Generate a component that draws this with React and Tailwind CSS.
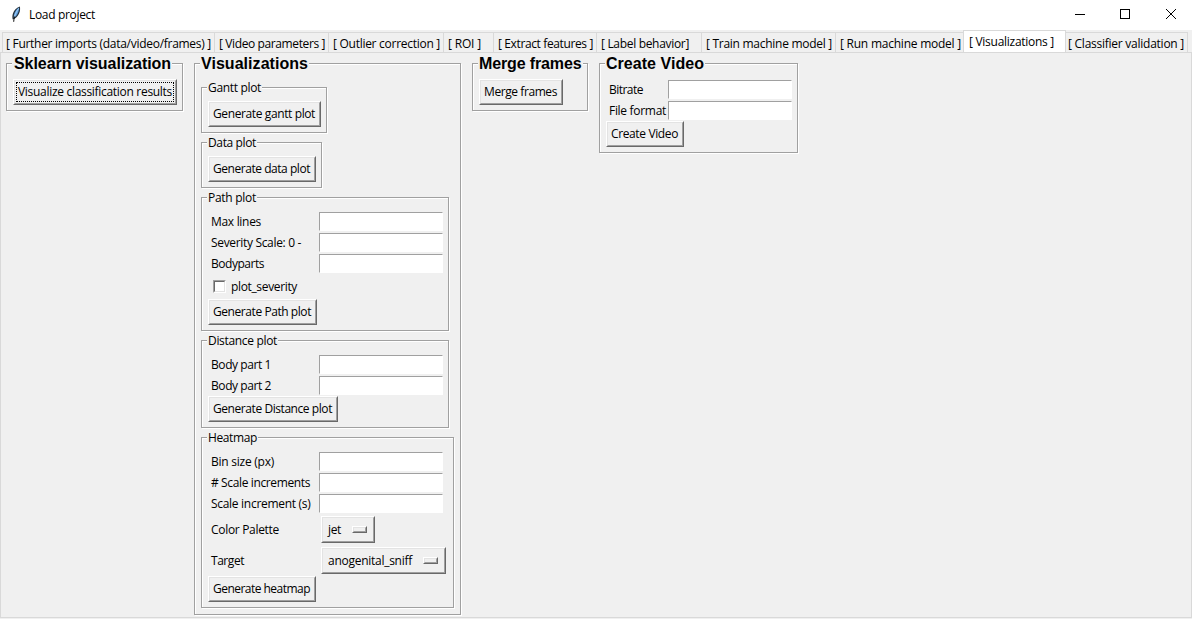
import React, { useLayoutEffect, useRef, useState } from "react";

// A run of text whose tracking is tuned so that it spans w pixels.
function Fit({ w, children, className = "" }) {
  const ref = useRef(null);
  const [spacing, setSpacing] = useState(null);
  useLayoutEffect(() => {
    const natural = ref.current.getBoundingClientRect().width;
    setSpacing((w - natural) / String(children).length);
  }, [w, children]);
  return (
    <span
      ref={ref}
      className={`inline-block shrink-0 whitespace-pre ${className}`}
      style={spacing === null ? undefined : { letterSpacing: `${spacing}px` }}
    >
      {children}
    </span>
  );
}

function Frame({ title, w, big, titlePad = "pl-px", className, children }) {
  return (
    <section
      className={`flex shrink-0 flex-col items-start border border-[#a0a0a0] shadow-[1px_1px_0_#fff,inset_1px_1px_0_#fff] ${className}`}
    >
      {big ? (
        <h2 className={`-mt-2.5 ml-[5px] h-5 shrink-0 bg-[#f0f0f0] pr-px font-['Liberation_Sans',Arial,sans-serif] text-base leading-5 font-bold ${titlePad}`}>
          <Fit w={w}>{title}</Fit>
        </h2>
      ) : (
        <h3 className="-mt-2 ml-[5px] flex h-4 shrink-0 bg-[#f0f0f0] px-px leading-4">
          <Fit w={w}>{title}</Fit>
        </h3>
      )}
      {children}
    </section>
  );
}

function Raised({ className, children }) {
  return (
    <div className={`shrink-0 border border-t-white border-r-[#696969] border-b-[#696969] border-l-white ${className}`}>
      <div className="flex h-full items-center border border-t-[#e3e3e3] border-r-[#a0a0a0] border-b-[#a0a0a0] border-l-[#e3e3e3]">
        {children}
      </div>
    </div>
  );
}

function Button({ w, focus, className, children }) {
  return (
    <button type="button" className="block shrink-0 text-left">
      <Raised className={`h-[26px] ${className}`}>
        {focus ? (
          <span className="ml-px flex h-5 w-[158px] items-center border border-dotted border-black pl-px">
            <Fit w={w}>{children}</Fit>
          </span>
        ) : (
          <span className="flex items-center pl-[3px]">
            <Fit w={w}>{children}</Fit>
          </span>
        )}
      </Raised>
    </button>
  );
}

function Entry({ label, w, labelClass = "w-[111px]" }) {
  return (
    <label className="flex h-[21px] shrink-0 items-start">
      <span className={`shrink-0 pl-[3px] leading-[19px] ${labelClass}`}>
        <Fit w={w}>{label}</Fit>
      </span>
      <input className="h-[19px] w-[124px] border border-t-[#a0a0a0] border-r-white border-b-white border-l-[#a0a0a0] bg-white outline-none" />
    </label>
  );
}

function Option({ label, w, value, vw, className, rowClass }) {
  return (
    <div className={`flex h-[27px] shrink-0 items-center ${rowClass}`}>
      <span className="w-[113px] shrink-0 pl-[3px]">
        <Fit w={w}>{label}</Fit>
      </span>
      <Raised className={`h-[27px] ${className}`}>
        <span className="flex w-full items-center justify-between pr-1.5 pl-[5px]">
          <Fit w={vw}>{value}</Fit>
          <Raised className="h-[7px] w-[15px]" />
        </span>
      </Raised>
    </div>
  );
}

const tabs = [
  ["[ Further imports (data/video/frames) ]", 205, "w-[212px]"],
  ["[ Video parameters ]", 106, "w-[114px]"],
  ["[ Outlier correction ]", 107, "w-[115px]"],
  ["[ ROI ]", 33, "w-[50px]"],
  ["[ Extract features ]", 95, "w-[103px]"],
  ["[ Label behavior]", 88, "w-[105px]"],
  ["[ Train machine model ]", 126, "w-[134px]"],
  ["[ Run machine model ]", 121, "w-[128px]"],
  ["[ Visualizations ]", 85, "w-[103px]", true],
  ["[ Classifier validation ]", 116, "w-[122px]"],
];

function Feather() {
  return (
    <svg className="block" width="16" height="18" viewBox="0 0 16 18">
      <path d="M11.800.500C9 1.200 6 4 5 7.200c-.8 2.400-.8 4.600-.2 6.300l1.700-.7c2.500-1.200 4.500-4.200 5.300-7.300.4-1.800.4-3.800 0-5z" fill="#27333f" />
      <path d="M11 1.600C8.800 3 6.700 5.500 6 8.800l-.3 3C8 10.600 9.800 8 10.600 5.200c.4-1.300.5-2.600.4-3.600z" fill="#5c9ee0" />
      <path d="M10.600 2.400C8.400 5.800 7.200 8.200 6.400 11" stroke="#b9dcf8" strokeWidth=".8" fill="none" />
      <path d="M6.600 10.500C6 12.500 5.800 14 5.700 15.800" stroke="#111" strokeWidth="1" fill="none" />
    </svg>
  );
}

export default function App() {
  return (
    <div className="flex h-[619px] w-[1192px] flex-col overflow-hidden bg-[#f0f0f0] font-['Open_Sans','Noto_Sans',sans-serif] text-[12px] leading-4 text-black">
      <header className="flex h-[30px] shrink-0 items-center bg-white pl-2">
        <Feather />
        <Fit w={66} className="ml-[5px]">Load project</Fit>
        <svg className="ml-auto" width="117" height="30" viewBox="0 0 117 30" fill="none" stroke="#000" shapeRendering="crispEdges">
          <path d="M0 14.500h10" />
          <rect x="45.500" y="9.500" width="9" height="9" />
          <path d="M91 9l10 10M101 9l-10 10" shapeRendering="auto" />
        </svg>
      </header>

      <nav className="flex h-[22px] shrink-0 items-end pl-0.5">
        {tabs.map(([text, w, width, active], i) =>
          active ? (
            <div key={text} className={`h-[22px] shrink-0 border border-b-0 border-[#d9d9d9] bg-white pt-[3px] pl-[5px] ${width}`}>
              <Fit w={w}>{text}</Fit>
            </div>
          ) : (
            <div
              key={text}
              className={`h-5 shrink-0 border-t border-[#d9d9d9] pt-[3px] ${i === 9 ? "border-r pl-0.5" : i === 0 ? "border-l pl-[3px]" : "border-l pl-1"} ${width}`}
            >
              <Fit w={w}>{text}</Fit>
            </div>
          )
        )}
      </nav>

      <main className="flex h-[566px] shrink-0 items-start border border-[#d9d9d9] pt-2.5 pl-[5px]">
        <Frame big title="Sklearn visualization" w={157} titlePad="pl-0.5" className="h-12 w-[177px]">
          <div className="mt-[5px] ml-1.5">
            <Button w={154} focus className="w-[164px]">Visualize classification results</Button>
          </div>
        </Frame>

        <Frame big title="Visualizations" w={107} className="ml-[11px] h-[552px] w-[267px]">
          <div className="mt-[13px] ml-1.5 flex flex-col gap-[9px]">
            <Frame title="Gantt plot" w={53} className="h-[46px] w-[126px]">
              <div className="mt-[5px] ml-1.5">
                <Button w={102} className="w-[113px]">Generate gantt plot</Button>
              </div>
            </Frame>
            <Frame title="Data plot" w={48} className="h-[46px] w-[121px]">
              <div className="mt-[5px] ml-1.5">
                <Button w={97} className="w-[108px]">Generate data plot</Button>
              </div>
            </Frame>
            <Frame title="Path plot" w={48} className="h-[134px] w-[248px]">
              <div className="mt-1.5 ml-1.5 flex flex-col">
                <Entry label="Max lines" w={50} />
                <Entry label="Severity Scale: 0 -" w={90} />
                <Entry label="Bodyparts" w={53} />
                <label className="flex h-6 items-start pt-[5px] pl-[5px]">
                  <span className="size-[13px] border border-t-[#a0a0a0] border-r-white border-b-white border-l-[#a0a0a0]">
                    <span className="block size-full border border-t-[#696969] border-r-[#e3e3e3] border-b-[#e3e3e3] border-l-[#696969] bg-white" />
                  </span>
                  <Fit w={66} className="-mt-px ml-[5px]">plot_severity</Fit>
                </label>
                <Button w={98} className="w-[109px]">Generate Path plot</Button>
              </div>
            </Frame>
            <Frame title="Distance plot" w={69} className="h-[88px] w-[248px]">
              <div className="mt-1.5 ml-1.5 flex flex-col">
                <Entry label="Body part 1" w={60} />
                <Entry label="Body part 2" w={60} />
                <div className="-mt-px">
                  <Button w={119} className="w-[130px]">Generate Distance plot</Button>
                </div>
              </div>
            </Frame>
            <Frame title="Heatmap" w={49} className="h-[171px] w-[253px]">
              <div className="mt-1.5 ml-1.5 flex flex-col">
                <Entry label="Bin size (px)" w={63} />
                <Entry label="# Scale increments" w={99} />
                <Entry label="Scale increment (s)" w={99.5} />
                <Option label="Color Palette" w={68} value="jet" vw={13} className="w-[54px]" rowClass="mt-px" />
                <Option label="Target" w={33} value="anogenital_sniff" vw={84} className="w-[125px]" rowClass="mt-1 mb-0.5" />
                <Button w={97} className="w-[108px]">Generate heatmap</Button>
              </div>
            </Frame>
          </div>
        </Frame>

        <Frame big title="Merge frames" w={102.5} className="ml-[11px] h-12 w-[116px]">
          <div className="mt-[5px] ml-1.5">
            <Button w={73} className="w-[84px]">Merge frames</Button>
          </div>
        </Frame>

        <Frame big title="Create Video" w={98} className="ml-[11px] h-[90px] w-[199px]">
          <div className="mt-1.5 ml-1.5 flex flex-col">
            <Entry label="Bitrate" w={34} labelClass="w-[62px]" />
            <Entry label="File format" w={57} labelClass="w-[62px]" />
            <div className="-mt-px">
              <Button w={67} className="w-[78px]">Create Video</Button>
            </div>
          </div>
        </Frame>
      </main>
    </div>
  );
}
